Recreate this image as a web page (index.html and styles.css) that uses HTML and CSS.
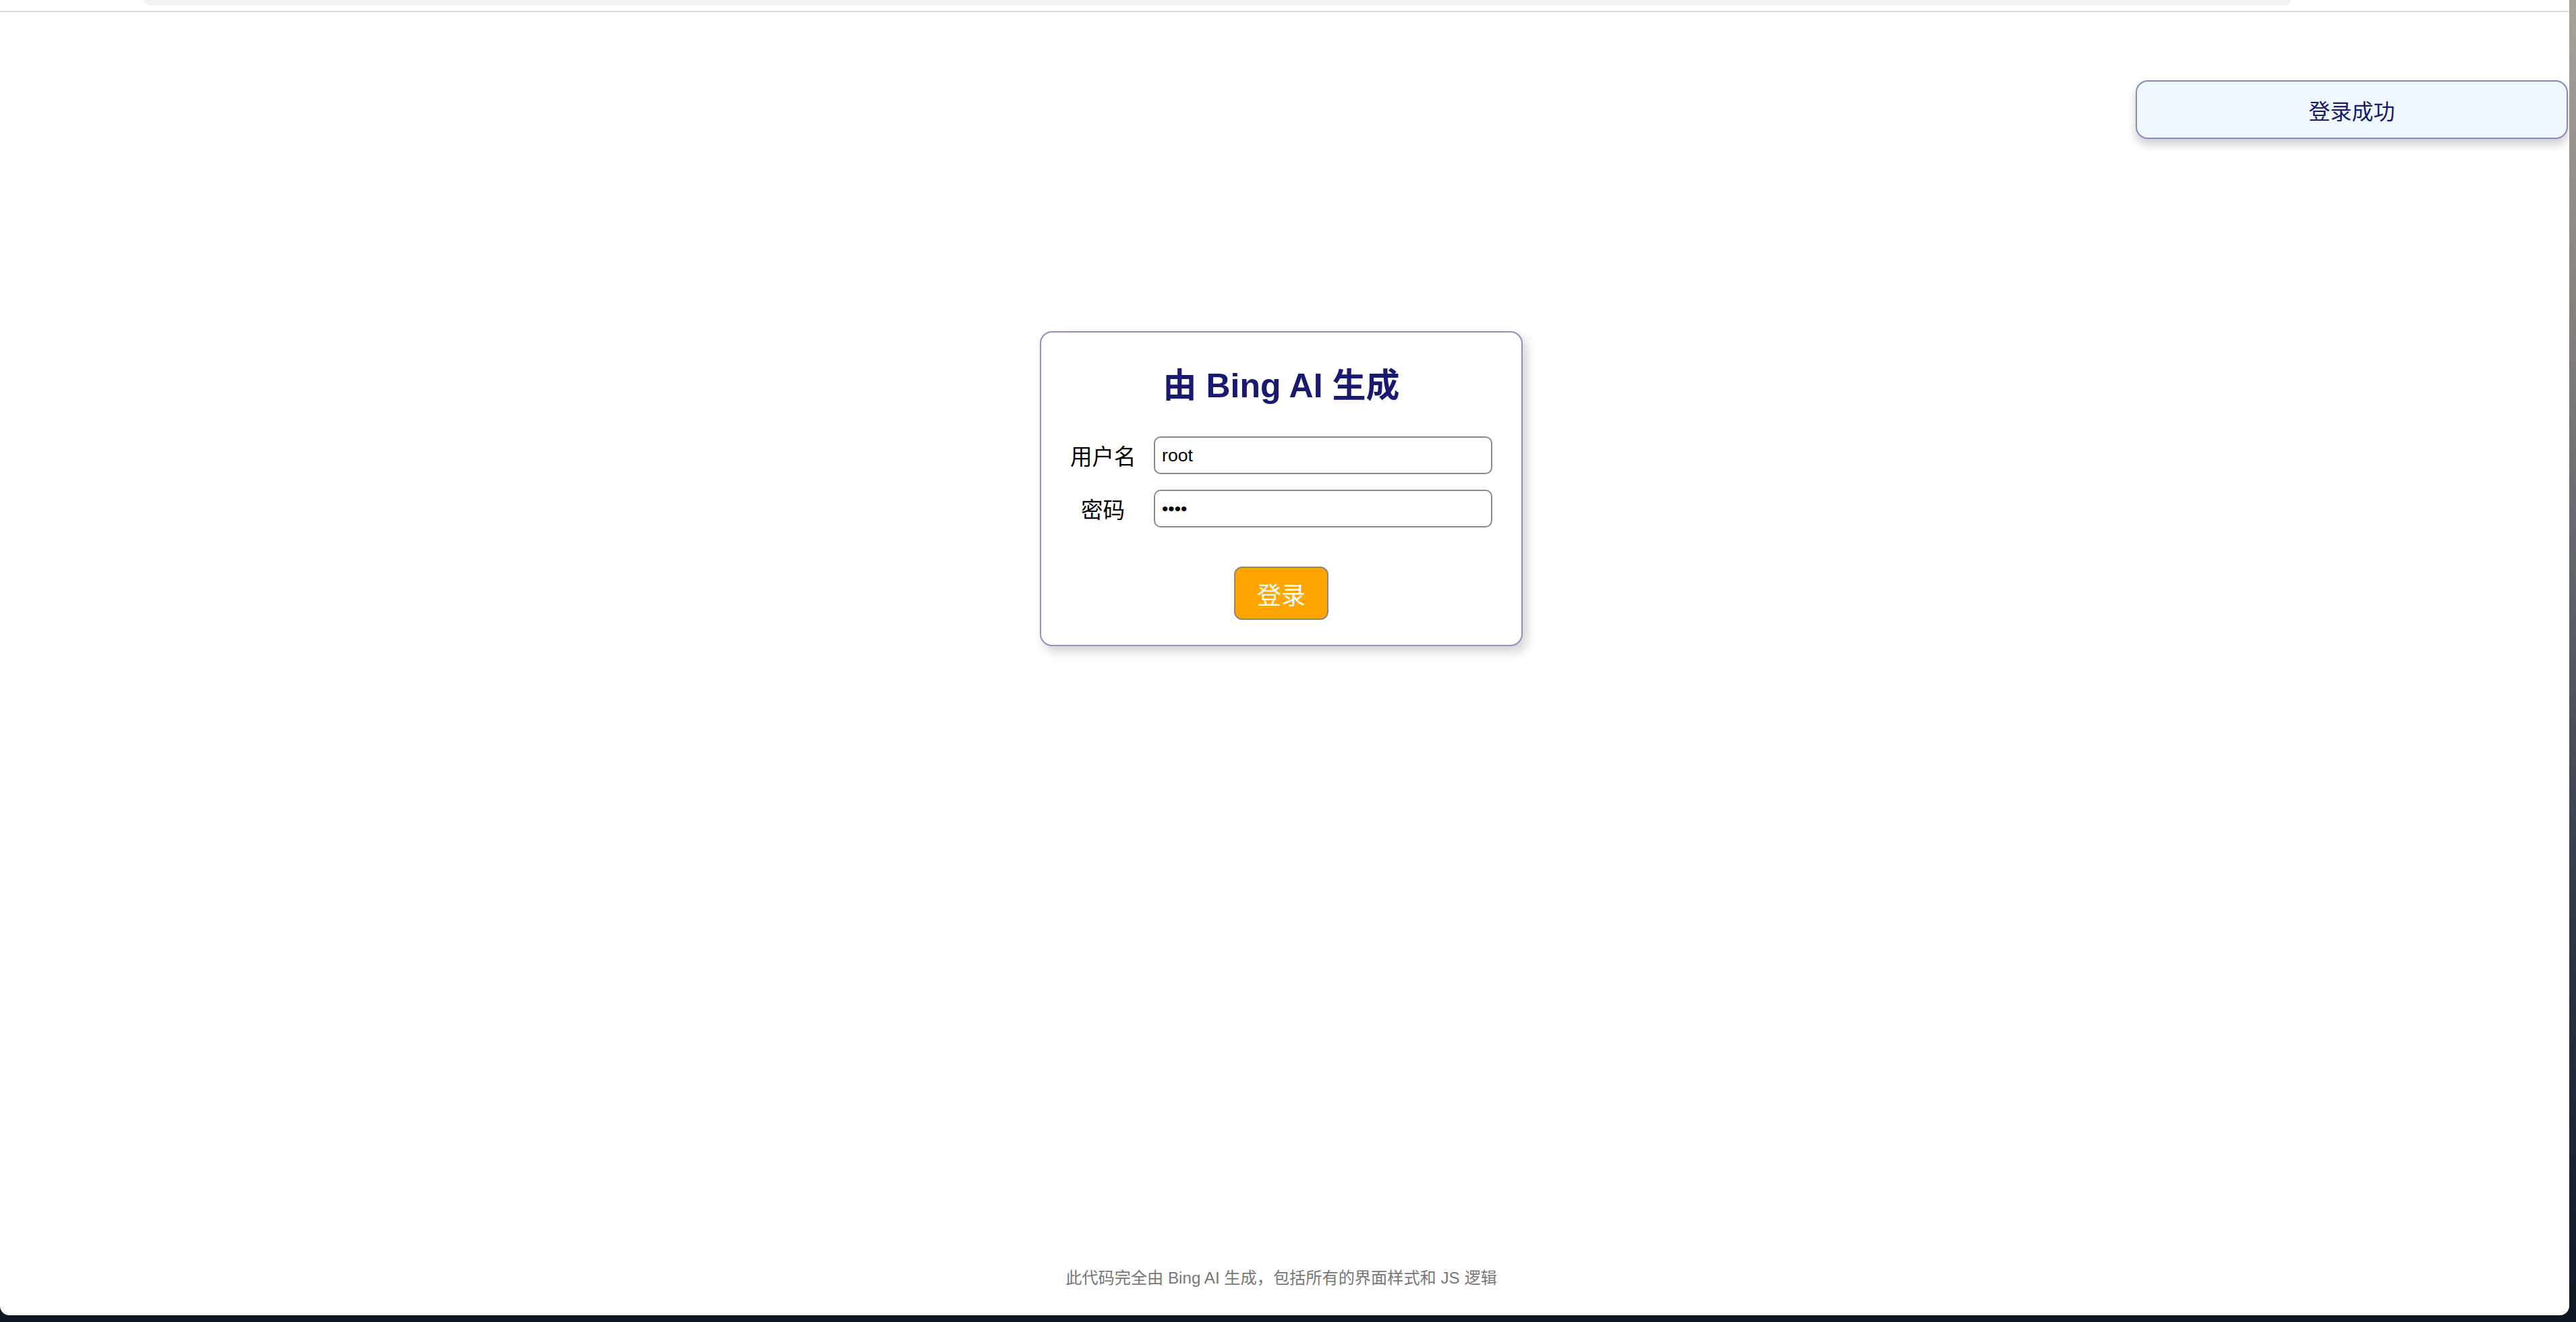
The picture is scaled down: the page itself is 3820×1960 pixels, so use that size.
FILE: index.html
```html
<!DOCTYPE html>
<html lang="zh-CN">
<head>
<meta charset="utf-8">
<title>由 Bing AI 生成</title>
<link rel="stylesheet" href="styles.css">
</head>
<body>
<div class="window">
  <div class="chrome"><div class="tab"></div></div>
  <main class="page">
    <form class="card">
      <h2 class="title">由 Bing AI 生成</h2>
      <div class="fields">
        <label class="label" for="username">用户名</label>
        <input id="username" class="input" type="text" value="root">
        <label class="label" for="password">密码</label>
        <input id="password" class="input" type="password" value="1234">
      </div>
      <button class="btn" type="button">登录</button>
    </form>
    <footer class="footer">此代码完全由 Bing AI 生成，包括所有的界面样式和 JS 逻辑</footer>
  </main>
  <div class="toast">登录成功</div>
</div>
</body>
</html>
```
FILE: styles.css
```css
html, body {
  margin: 0;
  padding: 0;
}

body {
  width: 3820px;
  height: 1960px;
  overflow: hidden;
  background: linear-gradient(to bottom, #a8a29b 0%, #8c8682 20%, #5e6169 45%, #2c3646 70%, #0d1722 100%);
  font-family: "Liberation Sans", "Noto Sans CJK SC", sans-serif;
}

.window {
  position: relative;
  width: 3810px;
  height: 1950px;
  background: #ffffff;
  border-radius: 0 0 14px 14px;
  display: flex;
  flex-direction: column;
  overflow: hidden;
}

.chrome {
  flex: none;
  height: 16px;
  border-bottom: 2px solid #dcdcdc;
}

.tab {
  margin-left: 214px;
  width: 3183px;
  height: 8px;
  background: #f1f2f4;
  border-radius: 0 0 10px 10px;
}

.page {
  flex: 1;
  width: 3800px;
  display: flex;
  flex-direction: column;
  align-items: center;
}

.card {
  margin: 473px 0 0;
  width: 716px;
  box-sizing: border-box;
  border: 2px solid #8f90bf;
  border-radius: 18px;
  background: #fff;
  padding: 54px 0 37px;
  display: flex;
  flex-direction: column;
  align-items: center;
  box-shadow: 6px 8px 16px rgba(0, 0, 0, 0.18);
}

.title {
  margin: 0;
  font-size: 50px;
  line-height: 50px;
  font-weight: bold;
  color: #191970;
  font-family: "Liberation Sans", "Noto Sans CJK SC", sans-serif;
}

.fields {
  margin-top: 50px;
  display: grid;
  grid-template-columns: 97px 502px;
  column-gap: 27px;
  row-gap: 23px;
  align-items: center;
}

.label {
  font-size: 32.5px;
  line-height: 40px;
  color: #000;
  text-align: center;
  white-space: nowrap;
  font-family: "Noto Sans CJK SC", sans-serif;
}

.input {
  display: block;
  width: 502px;
  height: 56px;
  box-sizing: border-box;
  margin: 0;
  padding: 0 10px;
  border: 2px solid #8a8a8a;
  border-radius: 10px;
  background: #fff;
  color: #000;
  font-family: "Liberation Sans", sans-serif;
  font-size: 26.67px;
  outline: none;
}

.btn {
  margin-top: 58px;
  width: 140px;
  height: 79px;
  box-sizing: border-box;
  padding: 0;
  border: 2px solid #888888;
  border-radius: 12px;
  background: #ffa500;
  color: #ffffff;
  font-size: 36px;
  font-family: "Noto Sans CJK SC", sans-serif;
  display: flex;
  align-items: center;
  justify-content: center;
}

.footer {
  margin-top: auto;
  padding-bottom: 38px;
  font-size: 24.2px;
  line-height: 34px;
  color: #777777;
}

.toast {
  position: absolute;
  top: 119px;
  left: 3167px;
  width: 641px;
  height: 87px;
  box-sizing: border-box;
  border: 2px solid #878bbb;
  border-radius: 18px;
  background: #f0f8ff;
  color: #191970;
  font-size: 32px;
  font-family: "Noto Sans CJK SC", sans-serif;
  display: flex;
  align-items: center;
  justify-content: center;
  box-shadow: 0 8px 14px rgba(0, 0, 0, 0.2);
}
```
